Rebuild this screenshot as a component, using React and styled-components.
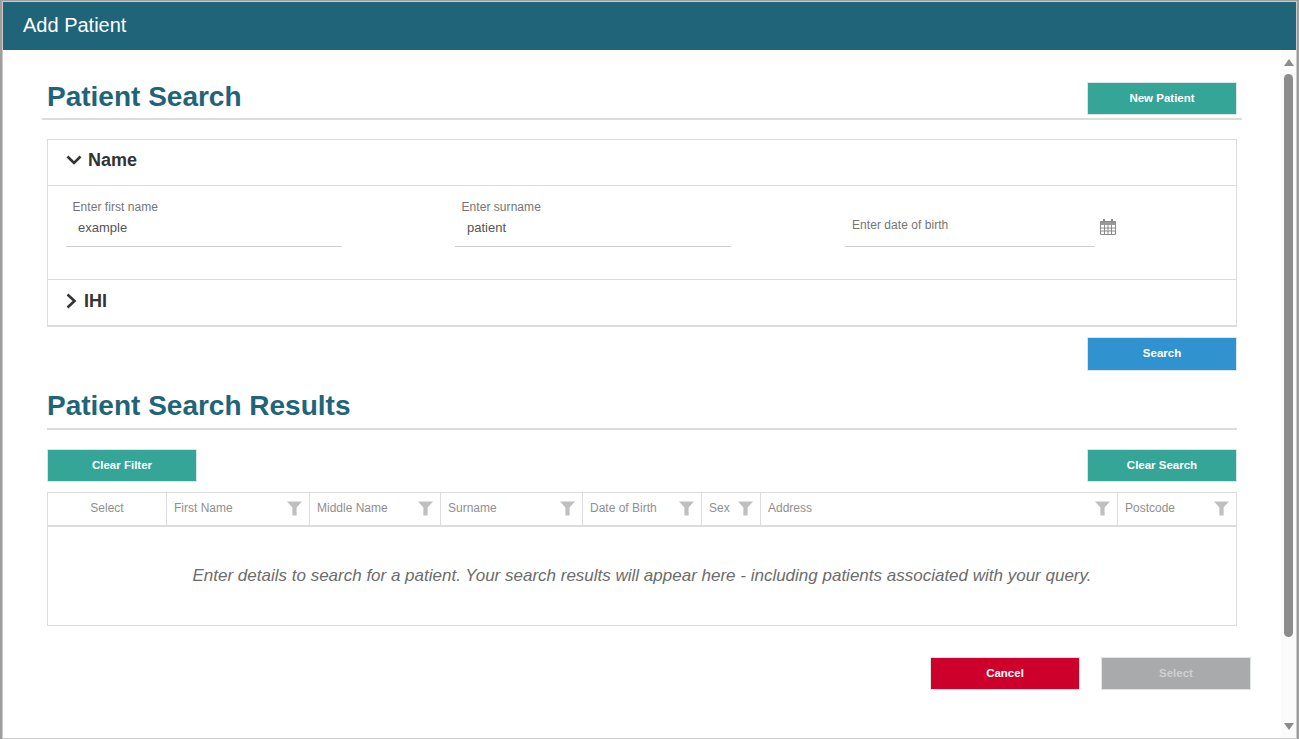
import React from "react";
import styled, { createGlobalStyle } from "styled-components";

const GlobalStyle = createGlobalStyle`
  html, body {
    margin: 0;
    padding: 0;
    height: 100%;
    overflow: hidden;
    background: #ffffff;
    font-family: "Liberation Sans", Arial, sans-serif;
  }
`;

const Page = styled.div`
  height: 739px;
  padding: 1px 2px 0 2px;
  box-sizing: border-box;
  background: #9e9e9e;
`;

const Modal = styled.div`
  height: 738px;
  display: flex;
  flex-direction: column;
  background: #fff;
  border: 1px solid #cbcbcb;
  box-sizing: border-box;
`;

const Header = styled.header`
  height: 48px;
  flex: none;
  display: flex;
  align-items: center;
  padding: 0 0 2px 20px;
  background: #1f6479;
  color: #fff;
  font-size: 20px;
  box-sizing: border-box;
`;

const Main = styled.div`
  flex: 1;
  display: flex;
  min-height: 0;
`;

const Content = styled.main`
  flex: 1;
  padding: 29px 44px 0 44px;
`;

const TitleRow = styled.div`
  display: flex;
  align-items: flex-end;
  justify-content: space-between;
  height: 36px;
  margin: ${(p) => (p.$wide ? "0 -5px 0 -5px" : "0")};
  padding: ${(p) => (p.$wide ? "0 5px 3px 5px" : "0 0 3px 0")};
  border-bottom: 2px solid #dcdcdc;
`;

const Title = styled.h2`
  margin: 0 0 2px 0;
  color: #1f6479;
  font-size: 28px;
  line-height: 32px;
  font-weight: 700;
`;

const Button = styled.button`
  width: 150px;
  height: ${(p) => p.$h || 33}px;
  padding: 0 0 2px 0;
  background: ${(p) => p.$bg};
  color: ${(p) => p.$color || "#fff"};
  border: 1px solid #dfe5e6;
  font-family: inherit;
  font-size: 11.5px;
  font-weight: 700;
`;

const Accordion = styled.section`
  margin-top: 19px;
  border: 1px solid #dcdcdc;
  border-bottom-width: 2px;
`;

const AccordionHead = styled.div`
  height: 45px;
  display: flex;
  align-items: center;
  gap: ${(p) => p.$gap}px;
  padding: 0 0 ${(p) => p.$lift}px 18px;
  box-sizing: border-box;
  color: #333;
  font-size: 18px;
  font-weight: 700;
  border-top: ${(p) => (p.$divided ? "1px solid #dcdcdc" : "0")};
  height: ${(p) => (p.$divided ? 46 : 45)}px;

  svg {
    margin-bottom: 2px;
  }
`;

const FieldsGrid = styled.div`
  height: 94px;
  display: grid;
  grid-template-columns: 389px 390px 1fr;
  padding-left: 18px;
  border-top: 1px solid #dcdcdc;
  box-sizing: border-box;
`;

const Field = styled.div`
  width: ${(p) => p.$width}px;
  height: 61px;
  display: flex;
  flex-direction: column;
  border-bottom: 1px solid #cfcfd3;
  box-sizing: border-box;
`;

const Label = styled.label`
  margin: ${(p) => (p.$empty ? "32px" : "14px")} 0 0 ${(p) => (p.$empty ? "7px" : "6.5px")};
  color: #757575;
  font-size: 12px;
  line-height: 14px;
  letter-spacing: 0.05px;
`;

const Value = styled.div`
  margin: 6px 0 0 12px;
  color: #555;
  font-size: 13px;
  line-height: 15px;
`;

const DateCell = styled.div`
  display: flex;
  align-items: flex-start;
`;

const CalendarButton = styled.span`
  margin: 32px 0 0 5px;
  display: block;
  line-height: 0;
`;

const ActionRow = styled.div`
  display: flex;
  justify-content: ${(p) => p.$justify || "flex-end"};
  margin-top: ${(p) => p.$top}px;
`;

const ResultsHead = styled(TitleRow)`
  margin-top: 11px;
  height: 42px;
  padding-bottom: 4px;
`;

const ResultsTable = styled.div`
  margin-top: 10px;
  border: 1px solid #dcdcdc;
`;

const HeadRow = styled.div`
  height: 32px;
  display: grid;
  grid-template-columns: 119px 143px 131px 142px 119px 59px 357px 118px;
  border-bottom: 2px solid #dcdcdc;
`;

const HeadCell = styled.div`
  display: flex;
  align-items: center;
  justify-content: ${(p) => (p.$center ? "center" : "space-between")};
  padding: 0 7px 2px 7px;
  color: #8f8f8f;
  font-size: 12px;
  border-right: ${(p) => (p.$last ? "0" : "1px solid #dcdcdc")};
  box-sizing: border-box;
`;

const EmptyMessage = styled.div`
  height: 98px;
  display: flex;
  align-items: center;
  justify-content: center;
  color: #6c6c6c;
  font-size: 17px;
  font-style: italic;
`;

const Footer = styled.div`
  display: flex;
  justify-content: flex-end;
  gap: 21px;
  margin: 31px -14px 0 0;
`;

const ScrollTrack = styled.div`
  width: 15px;
  flex: none;
  display: flex;
  flex-direction: column;
  align-items: center;
  background: #fbfbfb;
`;

const Arrow = styled.span`
  width: 0;
  height: 0;
  margin-top: ${(p) => p.$top}px;
  border-left: 5px solid transparent;
  border-right: 5px solid transparent;
  border-${(p) => (p.$down ? "top" : "bottom")}: 7px solid #8c8c8c;
`;

const ScrollThumb = styled.div`
  width: 9px;
  height: 563px;
  margin-top: 8px;
  background: #8c8c8c;
  border-radius: 5px;
`;

const FilterIcon = () => (
  <svg width="15" height="15" viewBox="0 0 15 15">
    <path d="M0 .5h15L9.6 6.6V14.5H5.4V6.6z" fill="#bfbfbf" />
  </svg>
);

const CalendarIcon = () => (
  <svg width="16" height="18" viewBox="0 0 16 18" fill="none" stroke="#8a8a8a">
    <path d="M.5 3.5h15v13H.5z" />
    <path d="M1 4h14v3H1z" fill="#9a9a9a" stroke="none" />
    <path d="M.5 10h15M.5 13h15M4.5 7v9.5M8 7v9.5M11.5 7v9.5" />
    <path d="M4 1v3.5M12 1v3.5" strokeWidth="2" />
  </svg>
);

const ChevronDown = () => (
  <svg width="16" height="10" viewBox="0 0 16 10" fill="none">
    <path d="M1.5 1.5L8 8l6.5-6.5" stroke="#333" strokeWidth="2.6" />
  </svg>
);

const ChevronRight = () => (
  <svg width="11" height="16" viewBox="0 0 11 16" fill="none">
    <path d="M1.5 1.5L8.5 8l-7 6.5" stroke="#333" strokeWidth="2.6" />
  </svg>
);

const columns = [
  { name: "Select", center: true },
  { name: "First Name" },
  { name: "Middle Name" },
  { name: "Surname" },
  { name: "Date of Birth" },
  { name: "Sex" },
  { name: "Address" },
  { name: "Postcode", last: true },
];

export default function App() {
  return (
    <Page>
      <GlobalStyle />
      <Modal>
        <Header>Add Patient</Header>
        <Main>
          <Content>
            <TitleRow $wide>
              <Title>Patient Search</Title>
              <Button $bg="#35a598">New Patient</Button>
            </TitleRow>

            <Accordion>
              <AccordionHead $gap={6} $lift={4}>
                <ChevronDown />
                Name
              </AccordionHead>
              <FieldsGrid>
                <Field $width={276}>
                  <Label>Enter first name</Label>
                  <Value>example</Value>
                </Field>
                <Field $width={276}>
                  <Label>Enter surname</Label>
                  <Value>patient</Value>
                </Field>
                <DateCell>
                  <Field $width={250}>
                    <Label $empty>Enter date of birth</Label>
                  </Field>
                  <CalendarButton>
                    <CalendarIcon />
                  </CalendarButton>
                </DateCell>
              </FieldsGrid>
              <AccordionHead $divided $gap={7} $lift={2}>
                <ChevronRight />
                IHI
              </AccordionHead>
            </Accordion>

            <ActionRow $top={10}>
              <Button $bg="#3192d0" $h={34}>Search</Button>
            </ActionRow>

            <ResultsHead>
              <Title>Patient Search Results</Title>
            </ResultsHead>

            <ActionRow $top={19} $justify="space-between">
              <Button $bg="#35a598">Clear Filter</Button>
              <Button $bg="#35a598">Clear Search</Button>
            </ActionRow>

            <ResultsTable>
              <HeadRow>
                {columns.map((col) => (
                  <HeadCell key={col.name} $center={col.center} $last={col.last}>
                    {col.name}
                    {!col.center && <FilterIcon />}
                  </HeadCell>
                ))}
              </HeadRow>
              <EmptyMessage>
                Enter details to search for a patient. Your search results will appear here - including patients associated with your query.
              </EmptyMessage>
            </ResultsTable>

            <Footer>
              <Button $bg="#cc002b">Cancel</Button>
              <Button $bg="#a9aaac" $color="#cfd0d2">Select</Button>
            </Footer>
          </Content>
          <ScrollTrack>
            <Arrow $top={9} />
            <ScrollThumb />
            <Arrow $down $top={86} />
          </ScrollTrack>
        </Main>
      </Modal>
    </Page>
  );
}
